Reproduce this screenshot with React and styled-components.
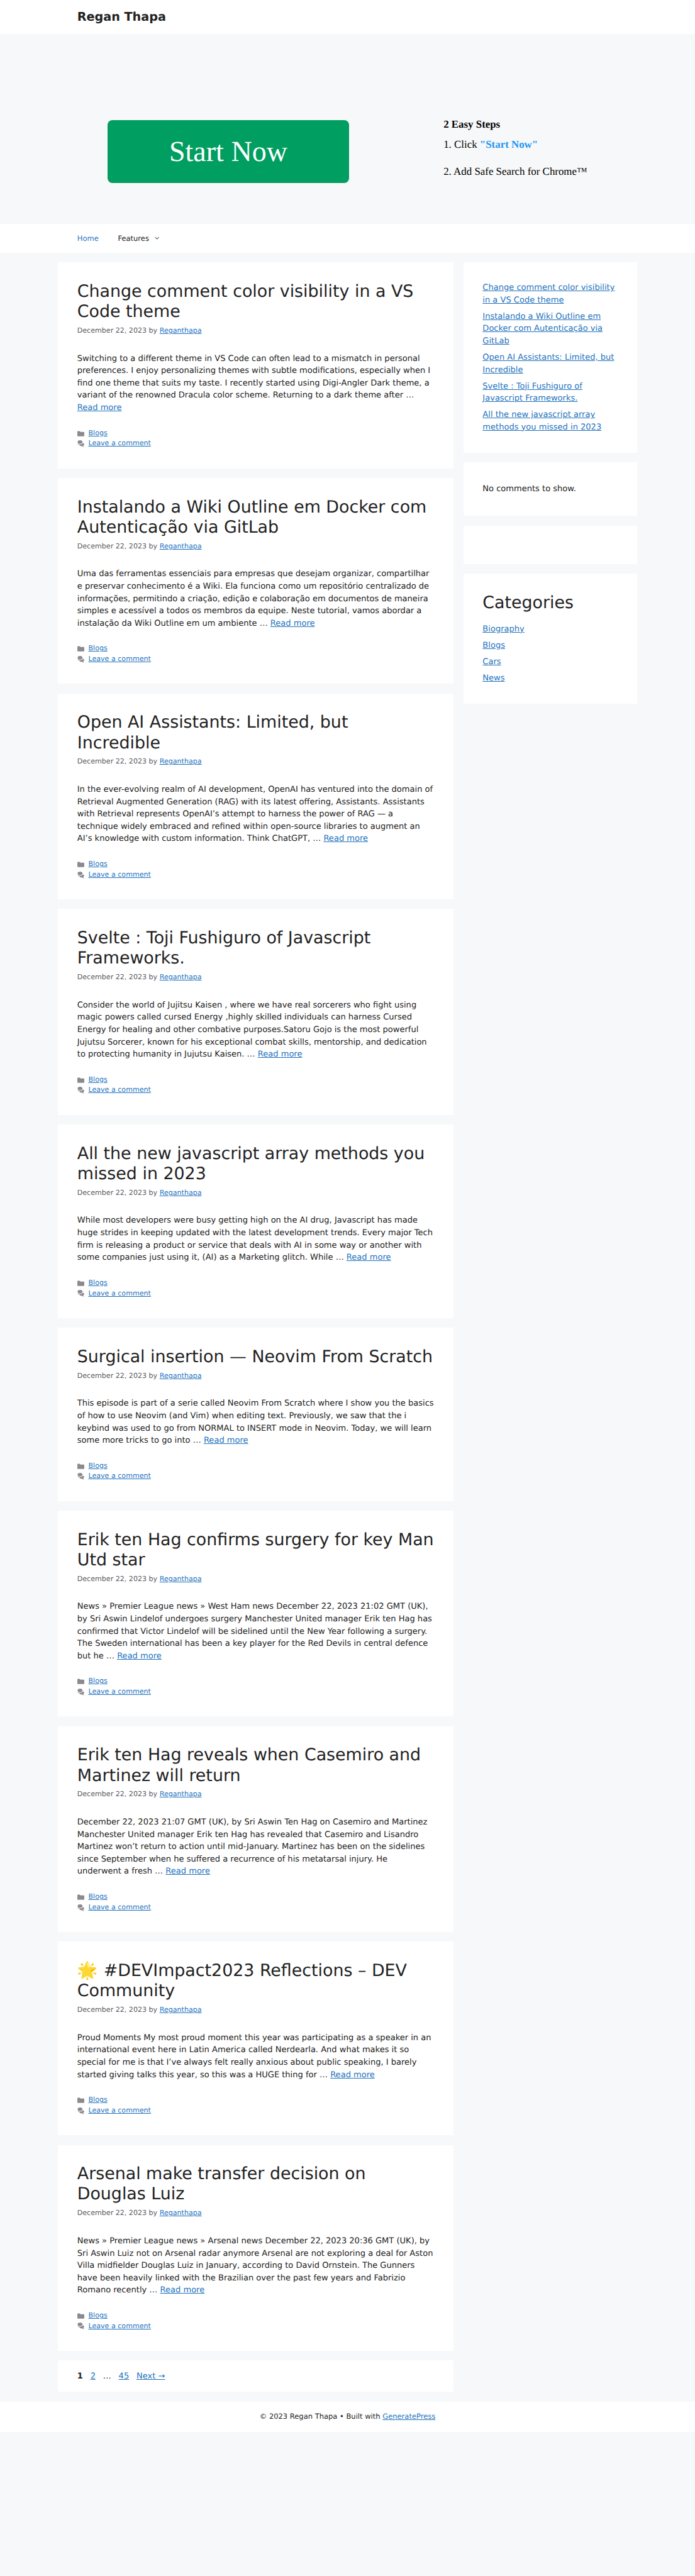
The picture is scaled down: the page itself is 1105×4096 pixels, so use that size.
import React from "react";
import styled, { createGlobalStyle } from "styled-components";

const SCALE = 1105 / 1440;
const px = (n) => `${+(n * SCALE).toFixed(4)}px`;

const color = {
  page: "#f7f8f9",
  surface: "#ffffff",
  text: "#222222",
  meta: "#595960",
  link: "#1e73be",
  action: "#009e60",
  accent: "#2196f3",
};

const sans = `"DejaVu Sans", sans-serif`;
const serif = `"Liberation Serif", serif`;

const GlobalStyle = createGlobalStyle`
  *, *::before, *::after { box-sizing: border-box; }
  html, body { margin: 0; padding: 0; background: ${color.page}; }
  body {
    font-family: ${sans};
    font-size: ${px(17)};
    line-height: 1.5;
    color: ${color.text};
    text-rendering: geometricPrecision;
  }
  h1, h2, p, ul { margin: 0; padding: 0; font-weight: 400; }
  ul { list-style: none; }
`;

const Page = styled.div`
  min-height: 4096px;
  overflow: hidden;
`;

const Bar = styled.div`
  background: ${color.surface};
`;

const Inner = styled.div`
  width: ${px(1200)};
  margin: 0 auto;
  padding: ${(p) => px(p.$y || 0)} ${px(40)};
`;

const SiteTitle = styled.h1`
  font-size: ${px(25)};
  line-height: 1.2;
  font-weight: 700;
`;

const Promo = styled.section`
  display: grid;
  grid-template-columns: ${px(500)} auto;
  column-gap: ${px(196)};
  align-content: start;
  height: ${px(394)};
  padding: ${px(175)} 0 0 ${px(223)};
  font-family: ${serif};
  color: #000;
`;

const StartButton = styled.a`
  display: flex;
  align-items: center;
  justify-content: center;
  height: ${px(130)};
  margin-top: ${px(4)};
  border-radius: ${px(10)};
  background: ${color.action};
  color: #fff;
  font-size: ${px(60)};
  line-height: 1;
`;

const Steps = styled.div`
  display: flex;
  flex-direction: column;
  font-size: ${px(22)};
  line-height: ${px(26)};
`;

const StepsTitle = styled.strong`
  font-weight: 700;
  margin-bottom: ${px(15.7)};
`;

const Step = styled.span`
  margin-bottom: ${px(30.3)};
  white-space: nowrap;
`;

const Highlight = styled.b`
  color: ${color.accent};
`;

const Menu = styled.nav`
  display: flex;
  gap: ${px(40)};
  font-size: ${px(15)};
  line-height: ${px(60)};
`;

const MenuItem = styled.a`
  color: ${(p) => (p.$current ? color.link : color.text)};
`;

const Caret = styled.svg`
  width: ${px(9.6)};
  height: ${px(15)};
  margin-left: ${px(12)};
  vertical-align: ${px(-1.9)};
  fill: currentColor;
`;

const Columns = styled.div`
  display: flex;
  gap: ${px(20)};
  width: ${px(1200)};
  margin: ${px(20)} auto;
`;

const Stack = styled.div`
  display: flex;
  flex-direction: column;
  gap: ${px(20)};
  width: ${(p) => px(p.$width)};
`;

const Card = styled.article`
  background: ${color.surface};
  padding: ${(p) => px(p.$y || 40)} ${px(40)};
`;

const Link = styled.a`
  color: ${color.link};
  text-decoration: underline;
`;

const Heading = styled.h2`
  font-size: ${px(35)};
  line-height: 1.2;
  white-space: nowrap;
`;

const Byline = styled.div`
  margin-top: 0.5em;
  font-size: ${px(14.45)};
  color: ${color.meta};
`;

const Summary = styled.p`
  margin-top: ${px(34)};
  white-space: nowrap;
`;

const PostFooter = styled.footer`
  margin-top: 2em;
  font-size: ${px(14.45)};
  color: ${color.meta};
`;

const FooterLine = styled.div`
  display: flex;
  align-items: center;
  gap: 0.6em;
`;

const Icon = styled.svg`
  width: 1em;
  height: 1em;
  fill: currentColor;
  opacity: 0.7;
`;

const LinkList = styled.ul`
  display: flex;
  flex-direction: column;
  gap: 0.5em;
  white-space: nowrap;
`;

const Notice = styled.p`
  line-height: 1.8;
`;

const WidgetTitle = styled(Heading)`
  margin-bottom: ${px(20)};
`;

const Pagination = styled.nav`
  display: flex;
  gap: ${px(15.4)};
`;

const Copyright = styled.div`
  font-size: ${px(15)};
  text-align: center;
`;

const posts = [
  {
    title: ["Change comment color visibility in a VS", "Code theme"],
    body: [
      "Switching to a different theme in VS Code can often lead to a mismatch in personal",
      "preferences. I enjoy personalizing themes with subtle modifications, especially when I",
      "find one theme that suits my taste. I recently started using Digi-Angler Dark theme, a",
      "variant of the renowned Dracula color scheme. Returning to a dark theme after …",
      "",
    ],
  },
  {
    title: ["Instalando a Wiki Outline em Docker com", "Autenticação via GitLab"],
    body: [
      "Uma das ferramentas essenciais para empresas que desejam organizar, compartilhar",
      "e preservar conhecimento é a Wiki. Ela funciona como um repositório centralizado de",
      "informações, permitindo a criação, edição e colaboração em documentos de maneira",
      "simples e acessível a todos os membros da equipe. Neste tutorial, vamos abordar a",
      "instalação da Wiki Outline em um ambiente … ",
    ],
  },
  {
    title: ["Open AI Assistants: Limited, but", "Incredible"],
    body: [
      "In the ever-evolving realm of AI development, OpenAI has ventured into the domain of",
      "Retrieval Augmented Generation (RAG) with its latest offering, Assistants. Assistants",
      "with Retrieval represents OpenAI’s attempt to harness the power of RAG — a",
      "technique widely embraced and refined within open-source libraries to augment an",
      "AI’s knowledge with custom information. Think ChatGPT, … ",
    ],
  },
  {
    title: ["Svelte : Toji Fushiguro of Javascript", "Frameworks."],
    body: [
      "Consider the world of Jujitsu Kaisen , where we have real sorcerers who fight using",
      "magic powers called cursed Energy ,highly skilled individuals can harness Cursed",
      "Energy for healing and other combative purposes.Satoru Gojo is the most powerful",
      "Jujutsu Sorcerer, known for his exceptional combat skills, mentorship, and dedication",
      "to protecting humanity in Jujutsu Kaisen. … ",
    ],
  },
  {
    title: ["All the new javascript array methods you", "missed in 2023"],
    body: [
      "While most developers were busy getting high on the AI drug, Javascript has made",
      "huge strides in keeping updated with the latest development trends. Every major Tech",
      "firm is releasing a product or service that deals with AI in some way or another with",
      "some companies just using it, (AI) as a Marketing glitch. While … ",
    ],
  },
  {
    title: ["Surgical insertion — Neovim From Scratch"],
    body: [
      "This episode is part of a serie called Neovim From Scratch where I show you the basics",
      "of how to use Neovim (and Vim) when editing text. Previously, we saw that the i",
      "keybind was used to go from NORMAL to INSERT mode in Neovim. Today, we will learn",
      "some more tricks to go into … ",
    ],
  },
  {
    title: ["Erik ten Hag confirms surgery for key Man", "Utd star"],
    body: [
      "News » Premier League news » West Ham news December 22, 2023 21:02 GMT (UK),",
      "by Sri Aswin Lindelof undergoes surgery Manchester United manager Erik ten Hag has",
      "confirmed that Victor Lindelof will be sidelined until the New Year following a surgery.",
      "The Sweden international has been a key player for the Red Devils in central defence",
      "but he … ",
    ],
  },
  {
    title: ["Erik ten Hag reveals when Casemiro and", "Martinez will return"],
    body: [
      "December 22, 2023 21:07 GMT (UK), by Sri Aswin Ten Hag on Casemiro and Martinez",
      "Manchester United manager Erik ten Hag has revealed that Casemiro and Lisandro",
      "Martinez won’t return to action until mid-January. Martinez has been on the sidelines",
      "since September when he suffered a recurrence of his metatarsal injury. He",
      "underwent a fresh … ",
    ],
  },
  {
    title: ["🌟 #DEVImpact2023 Reflections – DEV", "Community"],
    body: [
      "Proud Moments My most proud moment this year was participating as a speaker in an",
      "international event here in Latin America called Nerdearla. And what makes it so",
      "special for me is that I’ve always felt really anxious about public speaking, I barely",
      "started giving talks this year, so this was a HUGE thing for … ",
    ],
  },
  {
    title: ["Arsenal make transfer decision on", "Douglas Luiz"],
    body: [
      "News » Premier League news » Arsenal news December 22, 2023 20:36 GMT (UK), by",
      "Sri Aswin Luiz not on Arsenal radar anymore Arsenal are not exploring a deal for Aston",
      "Villa midfielder Douglas Luiz in January, according to David Ornstein. The Gunners",
      "have been heavily linked with the Brazilian over the past few years and Fabrizio",
      "Romano recently … ",
    ],
  },
];

const recentPosts = [
  ["Change comment color visibility", "in a VS Code theme"],
  ["Instalando a Wiki Outline em", "Docker com Autenticação via", "GitLab"],
  ["Open AI Assistants: Limited, but", "Incredible"],
  ["Svelte : Toji Fushiguro of", "Javascript Frameworks."],
  ["All the new javascript array", "methods you missed in 2023"],
];

const categories = ["Biography", "Blogs", "Cars", "News"];

const Lines = ({ of }) =>
  of.map((line, i) => (
    <React.Fragment key={i}>
      {i > 0 && <br />}
      {line}
    </React.Fragment>
  ));

const FolderIcon = () => (
  <Icon viewBox="0 0 512 512" aria-hidden="true">
    <path d="M0 112c0-26.51 21.49-48 48-48h110.014a48 48 0 0 1 43.592 27.907l12.349 26.791A16 16 0 0 0 228.486 128H464c26.51 0 48 21.49 48 48v224c0 26.51-21.49 48-48 48H48c-26.51 0-48-21.49-48-48V112z" />
  </Icon>
);

const CommentsIcon = () => (
  <Icon viewBox="0 0 512 512" aria-hidden="true">
    <path d="M132.838 329.973a435.298 435.298 0 0 0 16.769-9.004c13.363-7.574 26.587-16.142 37.419-25.507 7.544.597 15.27.925 23.098.925 54.905 0 105.634-15.311 143.285-41.28 23.728-16.365 43.115-37.692 54.155-62.645 54.739 22.205 91.498 63.272 91.498 110.286 0 42.186-29.558 79.498-75.09 102.828 23.46 49.216 75.09 101.709 75.09 101.709s-115.837-38.35-154.424-78.46c-9.956 1.12-20.297 1.758-30.793 1.758-88.727 0-162.927-43.071-181.007-100.61z" />
    <path d="M383.371 132.502c0 70.603-82.961 127.787-185.216 127.787-10.496 0-20.837-.639-30.793-1.757-38.587 40.093-154.424 78.429-154.424 78.429s51.63-52.472 75.09-101.67c-45.532-23.321-75.09-60.619-75.09-102.79C12.938 61.9 95.9 4.716 198.155 4.716 300.41 4.715 383.37 61.9 383.37 132.502z" />
  </Icon>
);

const Post = ({ title, body }) => (
  <Card>
    <Heading>
      <Lines of={title} />
    </Heading>
    <Byline>
      December 22, 2023 by <Link>Reganthapa</Link>
    </Byline>
    <Summary>
      <Lines of={body} />
      <Link>Read more</Link>
    </Summary>
    <PostFooter>
      <FooterLine>
        <FolderIcon />
        <Link>Blogs</Link>
      </FooterLine>
      <FooterLine>
        <CommentsIcon />
        <Link>Leave a comment</Link>
      </FooterLine>
    </PostFooter>
  </Card>
);

export default function App() {
  return (
    <Page>
      <GlobalStyle />
      <Bar as="header">
        <Inner $y={20}>
          <SiteTitle>Regan Thapa</SiteTitle>
        </Inner>
      </Bar>
      <Promo>
        <StartButton>Start Now</StartButton>
        <Steps>
          <StepsTitle>2 Easy Steps</StepsTitle>
          <Step>
            1. Click <Highlight>"Start Now"</Highlight>
          </Step>
          <Step>2. Add Safe Search for Chrome™</Step>
        </Steps>
      </Promo>
      <Bar>
        <Inner>
          <Menu>
            <MenuItem $current>Home</MenuItem>
            <MenuItem>
              Features
              <Caret viewBox="0 0 330 512" aria-hidden="true">
                <path d="M305.913 197.085c0 2.266-1.133 4.815-2.833 6.514L171.087 335.593c-1.7 1.7-4.249 2.832-6.515 2.832s-4.815-1.133-6.515-2.832L26.064 203.599c-1.7-1.7-2.832-4.248-2.832-6.514s1.132-4.816 2.832-6.515l14.162-14.163c1.7-1.699 3.966-2.832 6.515-2.832 2.266 0 4.815 1.133 6.515 2.832l111.316 111.317 111.316-111.317c1.7-1.699 4.249-2.832 6.515-2.832s4.815 1.133 6.515 2.832l14.162 14.163c1.7 1.7 2.833 4.249 2.833 6.515z" />
              </Caret>
            </MenuItem>
          </Menu>
        </Inner>
      </Bar>
      <Columns>
        <Stack as="main" $width={820}>
          {posts.map((post) => (
            <Post key={post.title[0]} {...post} />
          ))}
          <Card as="div" $y={20}>
            <Pagination>
              <b>1</b>
              <Link>2</Link>
              <span>…</span>
              <Link>45</Link>
              <Link>Next →</Link>
            </Pagination>
          </Card>
        </Stack>
        <Stack as="aside" $width={360}>
          <Card as="section">
            <LinkList>
              {recentPosts.map((lines) => (
                <li key={lines[0]}>
                  <Link>
                    <Lines of={lines} />
                  </Link>
                </li>
              ))}
            </LinkList>
          </Card>
          <Card as="section">
            <Notice>No comments to show.</Notice>
          </Card>
          <Card as="section" />
          <Card as="section">
            <WidgetTitle>Categories</WidgetTitle>
            <LinkList>
              {categories.map((name) => (
                <li key={name}>
                  <Link>{name}</Link>
                </li>
              ))}
            </LinkList>
          </Card>
        </Stack>
      </Columns>
      <Bar as="footer">
        <Inner $y={20}>
          <Copyright>
            © 2023 Regan Thapa • Built with <Link>GeneratePress</Link>
          </Copyright>
        </Inner>
      </Bar>
    </Page>
  );
}
